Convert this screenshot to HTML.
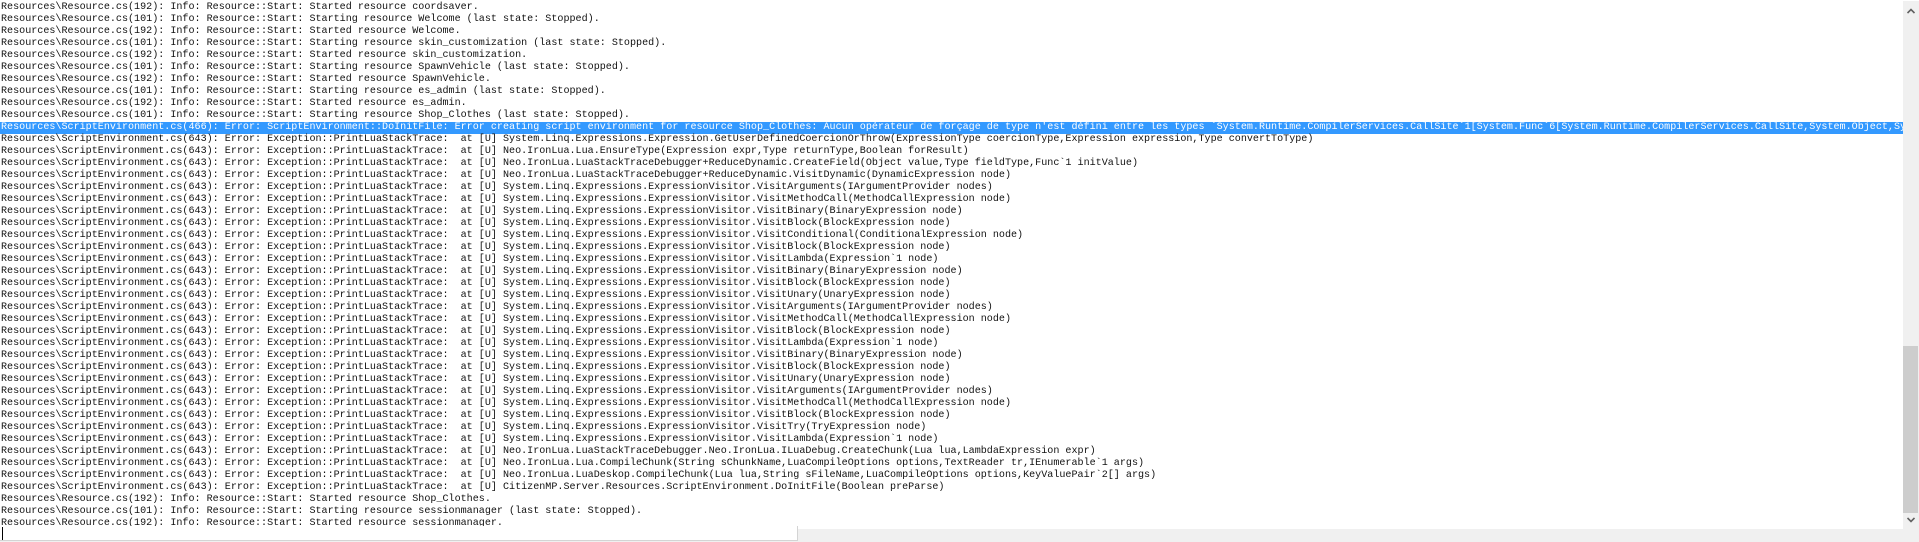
<!DOCTYPE html>
<html><head><meta charset="utf-8"><style>
html,body{margin:0;padding:0;width:1919px;height:542px;overflow:hidden;background:#fff;position:relative}
#log{position:absolute;left:0;top:0;width:1903px;height:526px;overflow:hidden}
#log pre{margin:0;padding:2px 0 0 1px;font-family:"Liberation Mono",monospace;font-size:10.08px;line-height:12px;color:#111;white-space:pre}
.sel{background:#3399ff;color:#fff;display:block;width:1902px;margin-left:-1px;padding-left:1px}
#vs{position:absolute;left:1903px;top:1px;width:16px;height:528px;background:#f0f0f0}
#thumb{position:absolute;left:0;top:345px;width:15px;height:167px;background:#cdcdcd}
#bot{position:absolute;left:0;top:529px;width:1919px;height:13px;background:#f0f0f0}
#inp{position:absolute;left:0;top:526px;width:797px;height:14px;background:#fff;border-right:1px solid #d4d4d4;border-bottom:1px solid #d4d4d4}
#cur{position:absolute;left:2px;top:527px;width:1px;height:13px;background:#000}
</style></head><body>
<div id="log"><pre>Resources\Resource.cs(192): Info: Resource::Start: Started resource coordsaver.
Resources\Resource.cs(101): Info: Resource::Start: Starting resource Welcome (last state: Stopped).
Resources\Resource.cs(192): Info: Resource::Start: Started resource Welcome.
Resources\Resource.cs(101): Info: Resource::Start: Starting resource skin_customization (last state: Stopped).
Resources\Resource.cs(192): Info: Resource::Start: Started resource skin_customization.
Resources\Resource.cs(101): Info: Resource::Start: Starting resource SpawnVehicle (last state: Stopped).
Resources\Resource.cs(192): Info: Resource::Start: Started resource SpawnVehicle.
Resources\Resource.cs(101): Info: Resource::Start: Starting resource es_admin (last state: Stopped).
Resources\Resource.cs(192): Info: Resource::Start: Started resource es_admin.
Resources\Resource.cs(101): Info: Resource::Start: Starting resource Shop_Clothes (last state: Stopped).
<span class="sel">Resources\ScriptEnvironment.cs(466): Error: ScriptEnvironment::DoInitFile: Error creating script environment for resource Shop_Clothes: Aucun opérateur de forçage de type n'est défini entre les types `System.Runtime.CompilerServices.CallSite`1[System.Func`6[System.Runtime.CompilerServices.CallSite,System.Object,System.Object]]</span>Resources\ScriptEnvironment.cs(643): Error: Exception::PrintLuaStackTrace:  at [U] System.Linq.Expressions.Expression.GetUserDefinedCoercionOrThrow(ExpressionType coercionType,Expression expression,Type convertToType)
Resources\ScriptEnvironment.cs(643): Error: Exception::PrintLuaStackTrace:  at [U] Neo.IronLua.Lua.EnsureType(Expression expr,Type returnType,Boolean forResult)
Resources\ScriptEnvironment.cs(643): Error: Exception::PrintLuaStackTrace:  at [U] Neo.IronLua.LuaStackTraceDebugger+ReduceDynamic.CreateField(Object value,Type fieldType,Func`1 initValue)
Resources\ScriptEnvironment.cs(643): Error: Exception::PrintLuaStackTrace:  at [U] Neo.IronLua.LuaStackTraceDebugger+ReduceDynamic.VisitDynamic(DynamicExpression node)
Resources\ScriptEnvironment.cs(643): Error: Exception::PrintLuaStackTrace:  at [U] System.Linq.Expressions.ExpressionVisitor.VisitArguments(IArgumentProvider nodes)
Resources\ScriptEnvironment.cs(643): Error: Exception::PrintLuaStackTrace:  at [U] System.Linq.Expressions.ExpressionVisitor.VisitMethodCall(MethodCallExpression node)
Resources\ScriptEnvironment.cs(643): Error: Exception::PrintLuaStackTrace:  at [U] System.Linq.Expressions.ExpressionVisitor.VisitBinary(BinaryExpression node)
Resources\ScriptEnvironment.cs(643): Error: Exception::PrintLuaStackTrace:  at [U] System.Linq.Expressions.ExpressionVisitor.VisitBlock(BlockExpression node)
Resources\ScriptEnvironment.cs(643): Error: Exception::PrintLuaStackTrace:  at [U] System.Linq.Expressions.ExpressionVisitor.VisitConditional(ConditionalExpression node)
Resources\ScriptEnvironment.cs(643): Error: Exception::PrintLuaStackTrace:  at [U] System.Linq.Expressions.ExpressionVisitor.VisitBlock(BlockExpression node)
Resources\ScriptEnvironment.cs(643): Error: Exception::PrintLuaStackTrace:  at [U] System.Linq.Expressions.ExpressionVisitor.VisitLambda(Expression`1 node)
Resources\ScriptEnvironment.cs(643): Error: Exception::PrintLuaStackTrace:  at [U] System.Linq.Expressions.ExpressionVisitor.VisitBinary(BinaryExpression node)
Resources\ScriptEnvironment.cs(643): Error: Exception::PrintLuaStackTrace:  at [U] System.Linq.Expressions.ExpressionVisitor.VisitBlock(BlockExpression node)
Resources\ScriptEnvironment.cs(643): Error: Exception::PrintLuaStackTrace:  at [U] System.Linq.Expressions.ExpressionVisitor.VisitUnary(UnaryExpression node)
Resources\ScriptEnvironment.cs(643): Error: Exception::PrintLuaStackTrace:  at [U] System.Linq.Expressions.ExpressionVisitor.VisitArguments(IArgumentProvider nodes)
Resources\ScriptEnvironment.cs(643): Error: Exception::PrintLuaStackTrace:  at [U] System.Linq.Expressions.ExpressionVisitor.VisitMethodCall(MethodCallExpression node)
Resources\ScriptEnvironment.cs(643): Error: Exception::PrintLuaStackTrace:  at [U] System.Linq.Expressions.ExpressionVisitor.VisitBlock(BlockExpression node)
Resources\ScriptEnvironment.cs(643): Error: Exception::PrintLuaStackTrace:  at [U] System.Linq.Expressions.ExpressionVisitor.VisitLambda(Expression`1 node)
Resources\ScriptEnvironment.cs(643): Error: Exception::PrintLuaStackTrace:  at [U] System.Linq.Expressions.ExpressionVisitor.VisitBinary(BinaryExpression node)
Resources\ScriptEnvironment.cs(643): Error: Exception::PrintLuaStackTrace:  at [U] System.Linq.Expressions.ExpressionVisitor.VisitBlock(BlockExpression node)
Resources\ScriptEnvironment.cs(643): Error: Exception::PrintLuaStackTrace:  at [U] System.Linq.Expressions.ExpressionVisitor.VisitUnary(UnaryExpression node)
Resources\ScriptEnvironment.cs(643): Error: Exception::PrintLuaStackTrace:  at [U] System.Linq.Expressions.ExpressionVisitor.VisitArguments(IArgumentProvider nodes)
Resources\ScriptEnvironment.cs(643): Error: Exception::PrintLuaStackTrace:  at [U] System.Linq.Expressions.ExpressionVisitor.VisitMethodCall(MethodCallExpression node)
Resources\ScriptEnvironment.cs(643): Error: Exception::PrintLuaStackTrace:  at [U] System.Linq.Expressions.ExpressionVisitor.VisitBlock(BlockExpression node)
Resources\ScriptEnvironment.cs(643): Error: Exception::PrintLuaStackTrace:  at [U] System.Linq.Expressions.ExpressionVisitor.VisitTry(TryExpression node)
Resources\ScriptEnvironment.cs(643): Error: Exception::PrintLuaStackTrace:  at [U] System.Linq.Expressions.ExpressionVisitor.VisitLambda(Expression`1 node)
Resources\ScriptEnvironment.cs(643): Error: Exception::PrintLuaStackTrace:  at [U] Neo.IronLua.LuaStackTraceDebugger.Neo.IronLua.ILuaDebug.CreateChunk(Lua lua,LambdaExpression expr)
Resources\ScriptEnvironment.cs(643): Error: Exception::PrintLuaStackTrace:  at [U] Neo.IronLua.Lua.CompileChunk(String sChunkName,LuaCompileOptions options,TextReader tr,IEnumerable`1 args)
Resources\ScriptEnvironment.cs(643): Error: Exception::PrintLuaStackTrace:  at [U] Neo.IronLua.LuaDeskop.CompileChunk(Lua lua,String sFileName,LuaCompileOptions options,KeyValuePair`2[] args)
Resources\ScriptEnvironment.cs(643): Error: Exception::PrintLuaStackTrace:  at [U] CitizenMP.Server.Resources.ScriptEnvironment.DoInitFile(Boolean preParse)
Resources\Resource.cs(192): Info: Resource::Start: Started resource Shop_Clothes.
Resources\Resource.cs(101): Info: Resource::Start: Starting resource sessionmanager (last state: Stopped).
Resources\Resource.cs(192): Info: Resource::Start: Started resource sessionmanager.
</pre></div>
<div id="vs">
<svg style="position:absolute;left:4px;top:7px" width="8" height="6"><path d="M0.5 5 L4 1.5 L7.5 5" fill="none" stroke="#606060" stroke-width="1.6"/></svg>
<div id="thumb"></div>
<svg style="position:absolute;left:4px;top:516px" width="8" height="6"><path d="M0.5 1 L4 4.5 L7.5 1" fill="none" stroke="#606060" stroke-width="1.6"/></svg>
</div>
<div id="bot"></div>
<div id="inp"></div>
<div id="cur"></div>
</body></html>
